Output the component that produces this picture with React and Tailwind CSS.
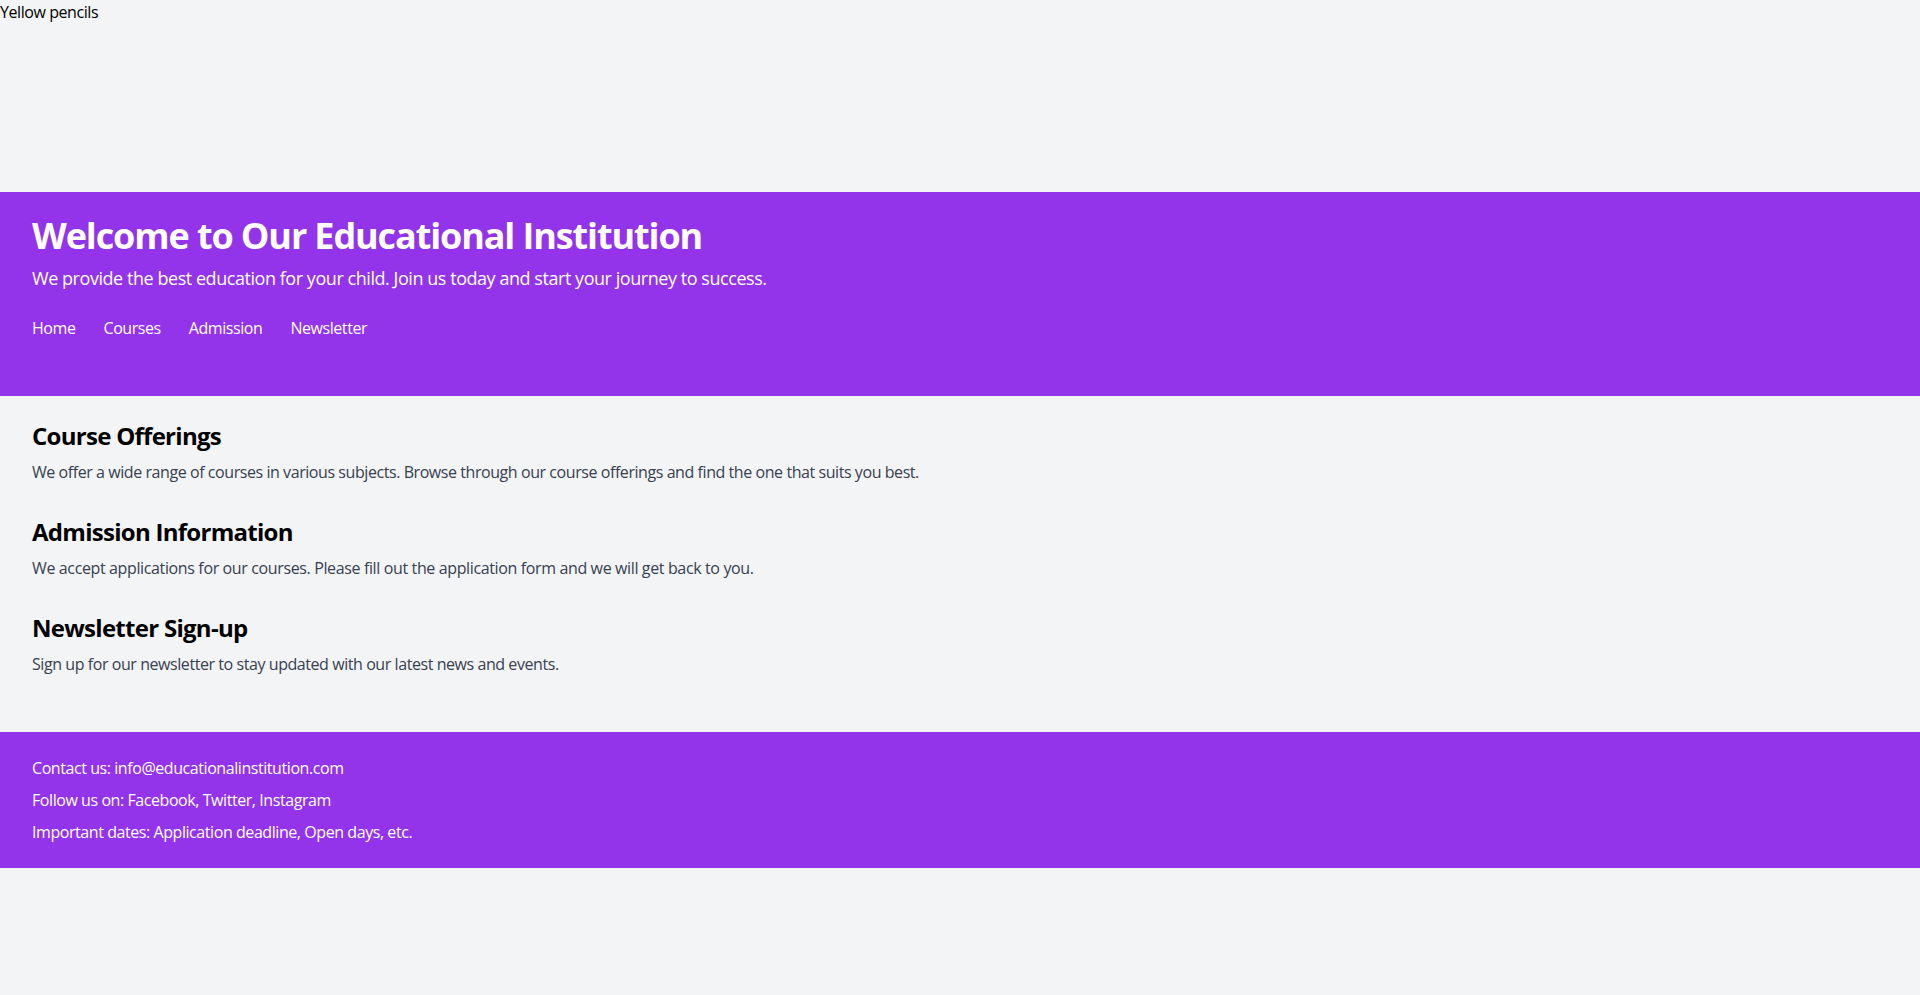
import React from 'react';

const App = () => {
  return (
    <div className="min-h-screen bg-[#f3f4f6] font-['Open_Sans',sans-serif] tracking-[-0.027em]">
      <div className="h-48 text-black">Yellow pencils</div>
      <header className="bg-[#9333ea] px-8 py-6 text-white">
        <h1 className="mb-2 text-4xl font-bold tracking-[-0.031em]">Welcome to Our Educational Institution</h1>
        <p className="text-lg tracking-[-0.025em]">We provide the best education for your child. Join us today and start your journey to success.</p>
        <nav className="mt-6 mb-8 flex gap-7">
          <a href="#">Home</a>
          <a href="#">Courses</a>
          <a href="#">Admission</a>
          <a href="#">Newsletter</a>
        </nav>
      </header>
      <main className="px-8 py-6">
        <section className="mb-8">
          <h2 className="mb-2 text-2xl font-bold tracking-[-0.03em] text-black">Course Offerings</h2>
          <p className="text-[#374151]">We offer a wide range of courses in various subjects. Browse through our course offerings and find the one that suits you best.</p>
        </section>
        <section className="mb-8">
          <h2 className="mb-2 text-2xl font-bold tracking-[-0.03em] text-black">Admission Information</h2>
          <p className="text-[#374151] tracking-[-0.023em]">We accept applications for our courses. Please fill out the application form and we will get back to you.</p>
        </section>
        <section className="mb-8">
          <h2 className="mb-2 text-2xl font-bold tracking-[-0.03em] text-black">Newsletter Sign-up</h2>
          <p className="text-[#374151]">Sign up for our newsletter to stay updated with our latest news and events.</p>
        </section>
      </main>
      <footer className="bg-[#9333ea] px-8 py-6 text-white">
        <p className="mb-2">Contact us: info@educationalinstitution.com</p>
        <p className="mb-2">Follow us on: Facebook, Twitter, Instagram</p>
        <p>Important dates: Application deadline, Open days, etc.</p>
      </footer>
    </div>
  );
};

export default App;
